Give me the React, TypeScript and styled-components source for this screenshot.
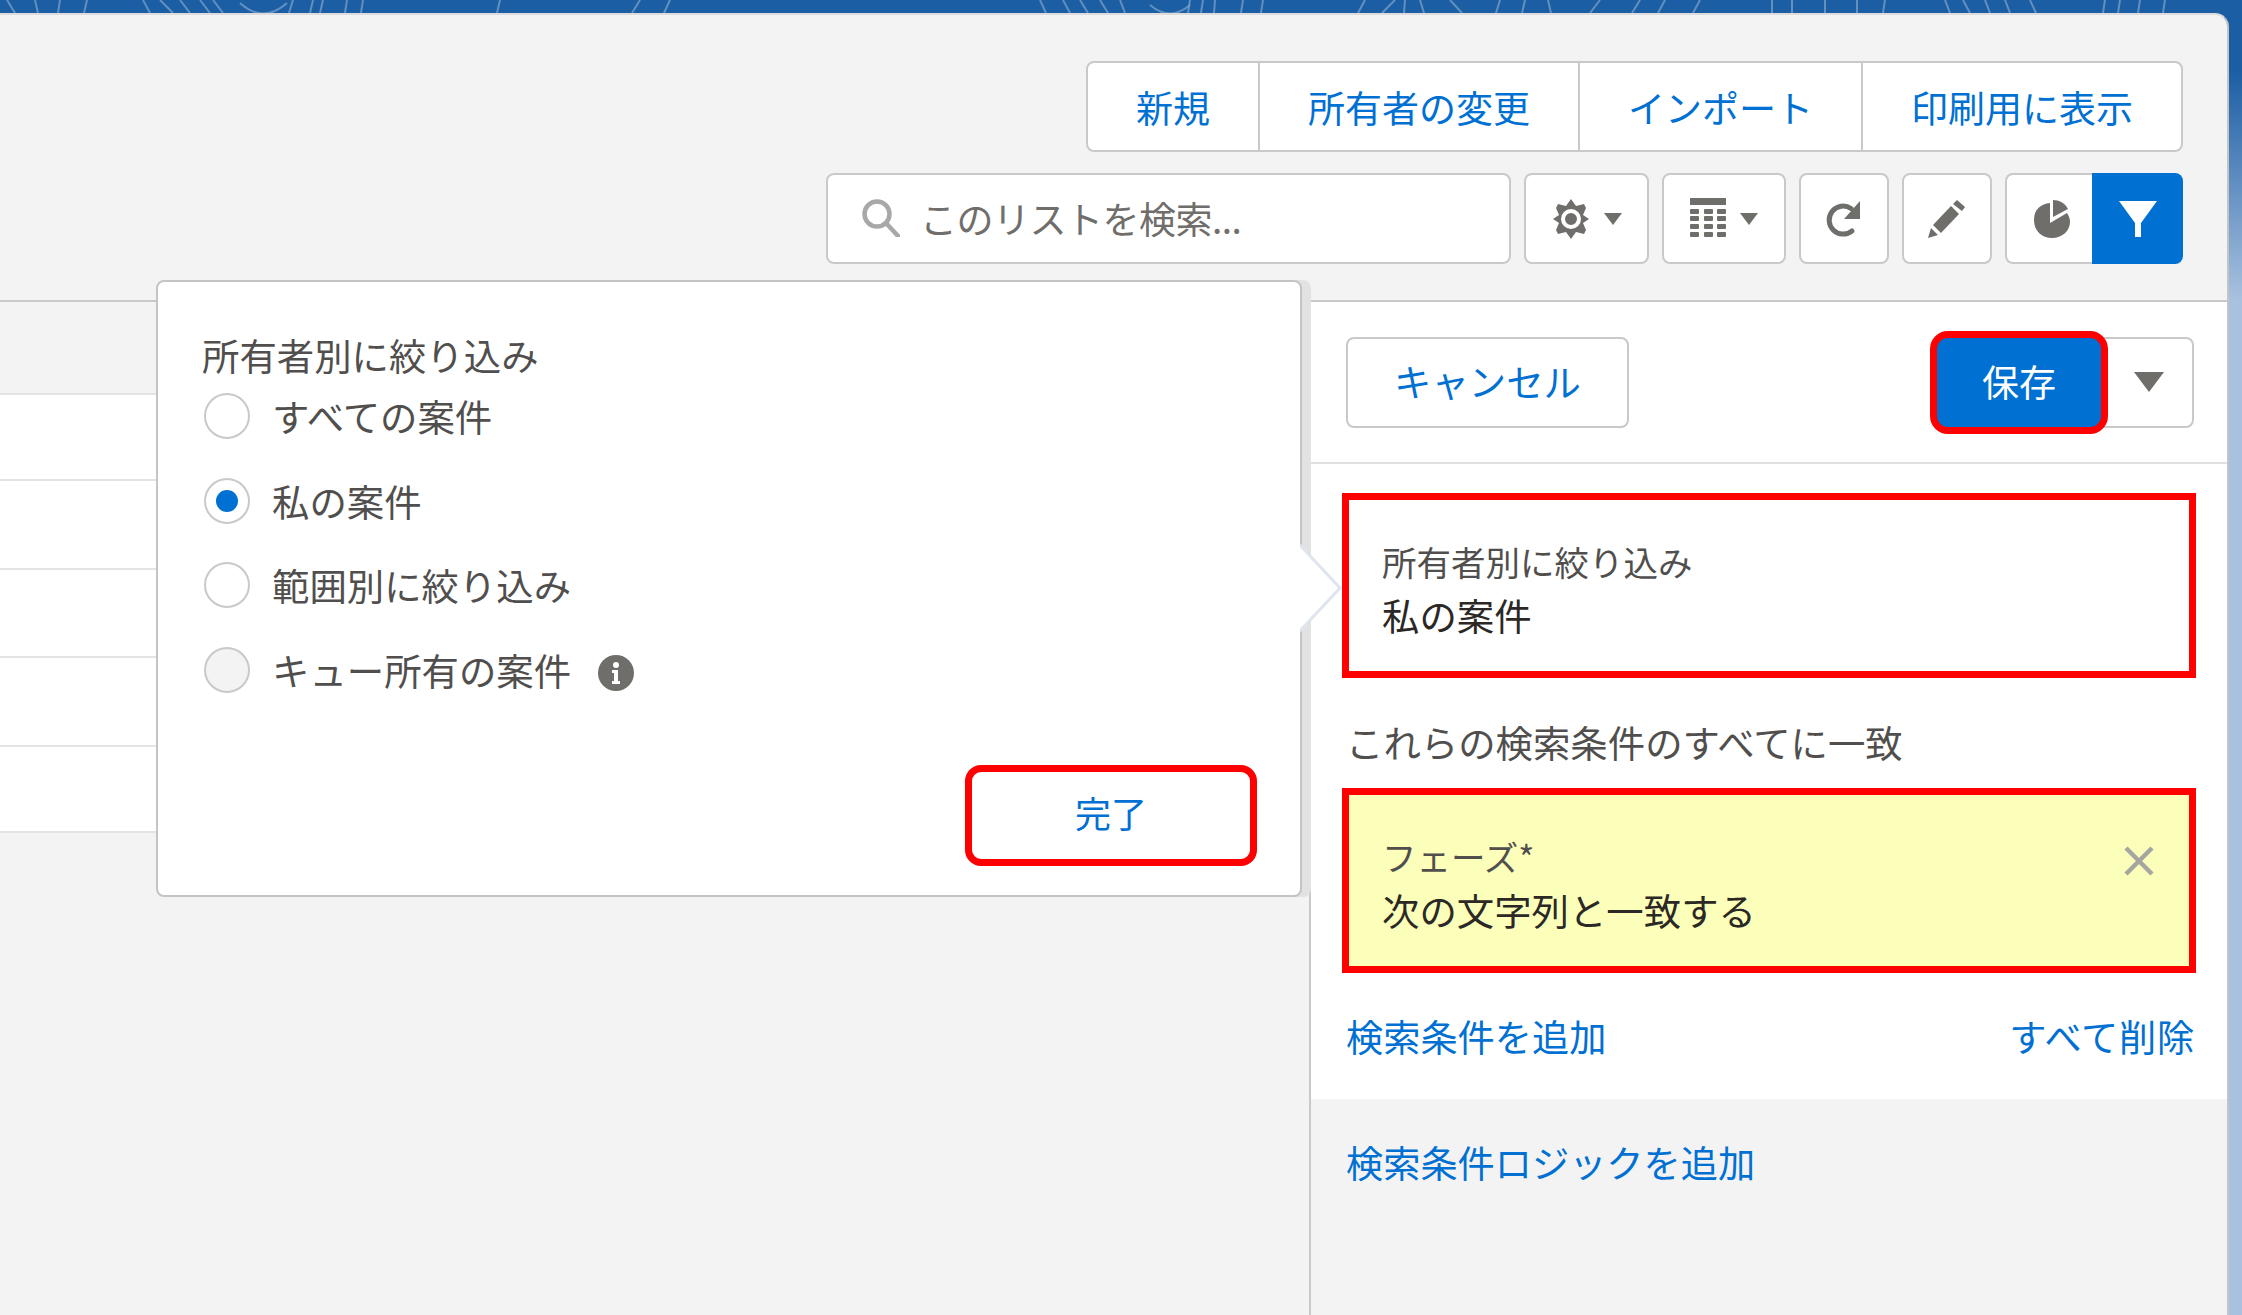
import styled, { createGlobalStyle } from "styled-components";

const GlobalStyle = createGlobalStyle`
  html, body {
    margin: 0;
    padding: 0;
  }
  body {
    font-family: "Noto Sans CJK JP", "Noto Sans", sans-serif;
    color: #3e3e3c;
  }
  * {
    box-sizing: border-box;
  }
`;

const Shell = styled.div`
  width: 2242px;
  height: 1315px;
  overflow: hidden;
  padding-right: 13px;
  display: flex;
  flex-direction: column;
  background: linear-gradient(#1b5ea3 0, #1b5ea3 70px, #a9c1df 300px);
`;

const BannerArt = styled.svg`
  display: block;
  flex: none;
  width: 2229px;
  height: 13px;
`;

const Card = styled.div`
  flex: 1;
  min-height: 0;
  display: flex;
  flex-direction: column;
  background: #f3f3f3;
  border-top: 2px solid #dcdcdc;
  border-right: 2px solid #c4c4c4;
  border-top-right-radius: 14px;
`;

const Header = styled.header`
  flex: none;
  height: 287px;
  padding: 46px 44px 0 0;
  display: flex;
  flex-direction: column;
  align-items: flex-end;
  gap: 21px;
  border-bottom: 2px solid #c9c9c9;
`;

const ButtonGroup = styled.div`
  display: flex;
  height: 91px;
  background: #fff;
  border: 2px solid #c9c9c9;
  border-radius: 8px;
`;

const GroupButton = styled.button`
  padding: 0 48px;
  border: none;
  border-left: 2px solid #c9c9c9;
  background: transparent;
  color: #0070d2;
  font: inherit;
  font-size: 37px;
  white-space: nowrap;

  &:first-child {
    border-left: none;
  }
`;

const ToolRow = styled.div`
  display: flex;
  gap: 13px;
  height: 91px;
`;

const SearchBox = styled.div`
  width: 685px;
  padding: 0 0 2px 34px;
  display: flex;
  align-items: center;
  gap: 20px;
  background: #fff;
  border: 2px solid #c9c9c9;
  border-radius: 8px;
  color: #706e6b;
  font-size: 37px;
  letter-spacing: -0.5px;
`;

const IconButton = styled.button<{ $w: number }>`
  width: ${(p) => p.$w}px;
  padding: 0;
  display: flex;
  align-items: center;
  justify-content: center;
  gap: 14px;
  background: #fff;
  border: 2px solid #c9c9c9;
  border-radius: 8px;
`;

const PairedGroup = styled.div`
  display: flex;
`;

const ChartButton = styled(IconButton)`
  padding-left: 4px;
  border-right: none;
  border-radius: 8px 0 0 8px;
`;

const FilterButton = styled(IconButton)`
  background: #0070d2;
  border: none;
  border-radius: 0 8px 8px 0;
`;

const Body = styled.div`
  flex: 1;
  min-height: 0;
  display: flex;
`;

const ListArea = styled.section`
  position: relative;
  z-index: 2;
  flex: 1;
  padding-top: 91px;
`;

const ListRow = styled.div<{ $h: number }>`
  height: ${(p) => p.$h}px;
  background: #fff;
  border-bottom: 2px solid #e4e4e4;

  &:first-child {
    border-top: 2px solid #e4e4e4;
  }
`;

const Popover = styled.div`
  position: absolute;
  top: -22px;
  left: 156px;
  width: 1146px;
  height: 617px;
  padding: 52px 43px 29px 46px;
  display: flex;
  flex-direction: column;
  background: #fff;
  border: 2px solid #c4c4c4;
  border-radius: 8px;
  box-shadow: 9px 0 0 #e2e2e2;
`;

const PopoverArrow = styled.svg`
  position: absolute;
  top: 262px;
  left: 100%;
  width: 42px;
  height: 88px;
`;

const PopoverTitle = styled.div`
  height: 44px;
  margin-left: -2px;
  font-size: 37.4px;
  line-height: 42px;
  color: #514f4d;
  white-space: nowrap;
`;

const RadioList = styled.div`
  display: flex;
  flex-direction: column;
  gap: 8.7px;
`;

const RadioRow = styled.label`
  height: 76px;
  display: flex;
  align-items: center;
  gap: 22px;
  font-size: 37.4px;
  color: #514f4d;
`;

const RadioMark = styled.span<{ $checked?: boolean; $disabled?: boolean }>`
  flex: none;
  width: 46px;
  height: 46px;
  display: flex;
  align-items: center;
  justify-content: center;
  border: 2px solid #c9c9c9;
  border-radius: 50%;
  background: ${(p) => (p.$disabled ? "#f3f3f3" : "#fff")};

  &::after {
    content: "";
    display: ${(p) => (p.$checked ? "block" : "none")};
    width: 22px;
    height: 22px;
    border-radius: 50%;
    background: #0070d2;
  }
`;

const InfoIcon = styled.svg`
  flex: none;
  width: 36px;
  height: 36px;
  margin-left: 5px;
  margin-top: 6px;
`;

const DoneButton = styled.button`
  margin-top: auto;
  align-self: flex-end;
  width: 292px;
  height: 101px;
  padding: 0 0 7px;
  background: #fff;
  border: 7px solid #f00;
  border-radius: 16px;
  color: #0070d2;
  font: inherit;
  font-size: 36px;
`;

const FilterPanel = styled.aside`
  position: relative;
  z-index: 1;
  flex: none;
  width: 918px;
  display: flex;
  flex-direction: column;
  background: #fff;
  border-left: 2px solid #c9c9c9;
`;

const PanelHeader = styled.div`
  flex: none;
  height: 162px;
  padding: 0 33px 0 35px;
  display: flex;
  align-items: center;
  justify-content: space-between;
  border-bottom: 2px solid #e0e0e0;
`;

const CancelButton = styled.button`
  width: 283px;
  height: 91px;
  padding: 0 0 2px;
  background: #fff;
  border: 2px solid #c9c9c9;
  border-radius: 8px;
  color: #0070d2;
  font: inherit;
  font-size: 37.4px;
`;

const SplitButton = styled.div`
  display: flex;
  align-items: center;
`;

const SaveButton = styled.button`
  position: relative;
  z-index: 1;
  width: 178px;
  height: 103px;
  padding: 0 0 2px;
  background: #0070d2;
  border: 7px solid #f00;
  border-radius: 18px;
  color: #fff;
  font: inherit;
  font-size: 37px;
`;

const CaretButton = styled.button`
  width: 93px;
  height: 91px;
  margin-left: -7px;
  padding: 0 0 0 3px;
  display: flex;
  align-items: center;
  justify-content: center;
  background: #fff;
  border: 2px solid #c9c9c9;
  border-radius: 0 8px 8px 0;
`;

const FilterSection = styled.div`
  flex: none;
  padding: 29px 31px 0 31px;
`;

const ConditionCard = styled.div<{ $highlight?: boolean }>`
  height: 185px;
  padding: 5px 35px 0 33px;
  display: flex;
  justify-content: space-between;
  background: ${(p) => (p.$highlight ? "#fbffb9" : "#fff")};
  border: 7px solid #f00;
`;

const ConditionText = styled.div`
  display: flex;
  flex-direction: column;
  justify-content: center;
`;

const ConditionLabel = styled.div`
  height: 54px;
  font-size: 34.5px;
  line-height: 54px;
  color: #514f4d;
`;

const ConditionValue = styled.div`
  height: 54px;
  font-size: 37.4px;
  line-height: 54px;
  color: #2b2826;
`;

const RemoveIcon = styled.svg`
  flex: none;
  width: 30px;
  height: 30px;
  margin-top: 46px;
`;

const MatchHeading = styled.div`
  height: 90px;
  margin-top: 20px;
  margin-left: 4px;
  font-size: 37.4px;
  line-height: 88px;
  color: #514f4d;
`;

const LinkRow = styled.div`
  height: 126px;
  padding: 0 1px 0 4px;
  display: flex;
  align-items: center;
  justify-content: space-between;
`;

const TextLink = styled.a`
  color: #0070d2;
  font-size: 37.2px;
  line-height: 44px;
`;

const ClearLink = styled(TextLink)`
  letter-spacing: 0.8px;
`;

const LogicSection = styled.div`
  flex: 1;
  padding: 41px 35px 0;
  background: #f3f3f3;
`;

const bannerLines = [
  [7, 15], [35, 38], [60, 58], [87, 84], [143, 150], [160, 173], [180, 190], [200, 210], [213, 223],
  [293, 289], [313, 310], [323, 320], [347, 345], [363, 361], [500, 497], [640, 632], [670, 664],
  [1040, 1046], [1063, 1070], [1080, 1088], [1100, 1108], [1120, 1125], [1190, 1188], [1203, 1201],
  [1215, 1214], [1243, 1241], [1263, 1261], [1365, 1358], [1395, 1382], [1405, 1404], [1420, 1424],
  [1450, 1462], [1500, 1496], [1525, 1522], [1548, 1551], [1600, 1590], [1640, 1632], [1665, 1658],
  [1700, 1693], [1772, 1772], [1792, 1792], [1825, 1825], [1857, 1857], [1885, 1883], [1945, 1950],
  [1963, 1970], [1985, 1990], [2005, 2010], [2030, 2036], [2105, 2103], [2120, 2118], [2140, 2138],
  [2165, 2163],
];

const Caret = ({ w = 18, h = 12 }: { w?: number; h?: number }) => (
  <svg width={w} height={h} viewBox="0 0 18 12">
    <path d="M0 0h18L9 12z" fill="#706e6b" />
  </svg>
);

const GearIcon = () => (
  <svg width="38" height="40" viewBox="0 0 38 40">
    <path
      fillRule="evenodd"
      fill="#706e6b"
      d="M19 0l5 7 8-2 2 4-3 7 6 4-6 4 3 7-2 4-8-2-5 7-5-7-8 2-2-4 3-7-6-4 6-4-3-7 2-4 8 2zM19 10a10 10 0 1 0 0 20 10 10 0 0 0 0-20zM19 14a6 6 0 1 1 0 12 6 6 0 0 1 0-12z"
    />
  </svg>
);

const TableIcon = () => (
  <svg width="36" height="41" viewBox="0 0 36 41" fill="#706e6b">
    <rect x="0" y="0" width="36" height="7" />
    {[11, 18, 26, 34].map((y) =>
      [0, 14, 27].map((x) => <rect key={`${x}-${y}`} x={x} y={y} width="9" height="5" rx="1" />)
    )}
  </svg>
);

const RefreshIcon = () => (
  <svg width="36" height="36" viewBox="0 0 36 36" fill="none">
    <path d="M25 7.5A14 14 0 1 0 26 30" stroke="#706e6b" strokeWidth="5" strokeLinecap="round" />
    <path d="M34 0v18H18z" fill="#706e6b" />
  </svg>
);

const PencilIcon = () => (
  <svg width="38" height="38" viewBox="0 0 38 38" fill="#706e6b">
    <path d="M29 0l8 7-3 4-9-7zM23 6l8 8-18 19-8-8zM3 28l7 7-10 3z" />
  </svg>
);

const PieIcon = () => (
  <svg width="36" height="38" viewBox="0 0 36 38" fill="#706e6b">
    <path d="M16 3v20l17-10c2 3 3 6 3 9 0 9-8 16-18 16S0 31 0 20 7 4 16 3z" />
    <path d="M19 0c6 0 12 3 15 9L19 17z" />
  </svg>
);

const FunnelIcon = () => (
  <svg width="38" height="36" viewBox="0 0 38 36" fill="#fff">
    <path d="M0 0h38L22 22v14h-6V22z" />
  </svg>
);

const SearchIcon = () => (
  <svg width="38" height="38" viewBox="0 0 38 38" fill="none" stroke="#a8a8a8" strokeWidth="4.5">
    <circle cx="15" cy="15" r="12.5" />
    <path d="M24 24l12 13" strokeLinecap="round" />
  </svg>
);

export default function App() {
  return (
    <>
      <GlobalStyle />
      <Shell>
        <BannerArt viewBox="0 0 2229 13">
          {bannerLines.map(([a, b]) => (
            <line key={a} x1={a} y1="0" x2={b} y2="13" stroke="#7fa6cf" strokeWidth="2" opacity="0.7" />
          ))}
          <path d="M240 3Q263 24 287 3M1150 5Q1170 22 1190 5" fill="none" stroke="#7fa6cf" strokeWidth="2" opacity="0.7" />
        </BannerArt>
        <Card>
          <Header>
            <ButtonGroup>
              <GroupButton>新規</GroupButton>
              <GroupButton>所有者の変更</GroupButton>
              <GroupButton>インポート</GroupButton>
              <GroupButton>印刷用に表示</GroupButton>
            </ButtonGroup>
            <ToolRow>
              <SearchBox>
                <SearchIcon />
                <span>このリストを検索...</span>
              </SearchBox>
              <IconButton $w={125}>
                <GearIcon />
                <Caret />
              </IconButton>
              <IconButton $w={124}>
                <TableIcon />
                <Caret />
              </IconButton>
              <IconButton $w={90}>
                <RefreshIcon />
              </IconButton>
              <IconButton $w={90}>
                <PencilIcon />
              </IconButton>
              <PairedGroup>
                <ChartButton $w={87}>
                  <PieIcon />
                </ChartButton>
                <FilterButton $w={91}>
                  <FunnelIcon />
                </FilterButton>
              </PairedGroup>
            </ToolRow>
          </Header>
          <Body>
            <ListArea>
              <ListRow $h={88} />
              <ListRow $h={89} />
              <ListRow $h={88} />
              <ListRow $h={89} />
              <ListRow $h={86} />
              <Popover>
                <PopoverTitle>所有者別に絞り込み</PopoverTitle>
                <RadioList>
                  <RadioRow>
                    <RadioMark />
                    すべての案件
                  </RadioRow>
                  <RadioRow>
                    <RadioMark $checked />
                    私の案件
                  </RadioRow>
                  <RadioRow>
                    <RadioMark />
                    範囲別に絞り込み
                  </RadioRow>
                  <RadioRow>
                    <RadioMark $disabled />
                    キュー所有の案件
                    <InfoIcon viewBox="0 0 36 36">
                      <circle cx="18" cy="18" r="18" fill="#706e6b" />
                      <circle cx="18" cy="10" r="3" fill="#fff" />
                      <path d="M14 15h6v11h2v3h-8v-3h2v-8h-2z" fill="#fff" />
                    </InfoIcon>
                  </RadioRow>
                </RadioList>
                <DoneButton>完了</DoneButton>
                <PopoverArrow viewBox="0 0 42 88">
                  <path d="M0 1L40 44 0 87" fill="#fff" stroke="#dfe4ee" strokeWidth="3" />
                </PopoverArrow>
              </Popover>
            </ListArea>
            <FilterPanel>
              <PanelHeader>
                <CancelButton>キャンセル</CancelButton>
                <SplitButton>
                  <SaveButton>保存</SaveButton>
                  <CaretButton>
                    <Caret w={30} h={20} />
                  </CaretButton>
                </SplitButton>
              </PanelHeader>
              <FilterSection>
                <ConditionCard>
                  <ConditionText>
                    <ConditionLabel>所有者別に絞り込み</ConditionLabel>
                    <ConditionValue>私の案件</ConditionValue>
                  </ConditionText>
                </ConditionCard>
                <MatchHeading>これらの検索条件のすべてに一致</MatchHeading>
                <ConditionCard $highlight>
                  <ConditionText>
                    <ConditionLabel>フェーズ*</ConditionLabel>
                    <ConditionValue>次の文字列と一致する</ConditionValue>
                  </ConditionText>
                  <RemoveIcon viewBox="0 0 30 30">
                    <path d="M2 2l26 26M28 2L2 28" stroke="#a6a6a0" strokeWidth="4.5" />
                  </RemoveIcon>
                </ConditionCard>
                <LinkRow>
                  <TextLink>検索条件を追加</TextLink>
                  <ClearLink>すべて削除</ClearLink>
                </LinkRow>
              </FilterSection>
              <LogicSection>
                <TextLink>検索条件ロジックを追加</TextLink>
              </LogicSection>
            </FilterPanel>
          </Body>
        </Card>
      </Shell>
    </>
  );
}
